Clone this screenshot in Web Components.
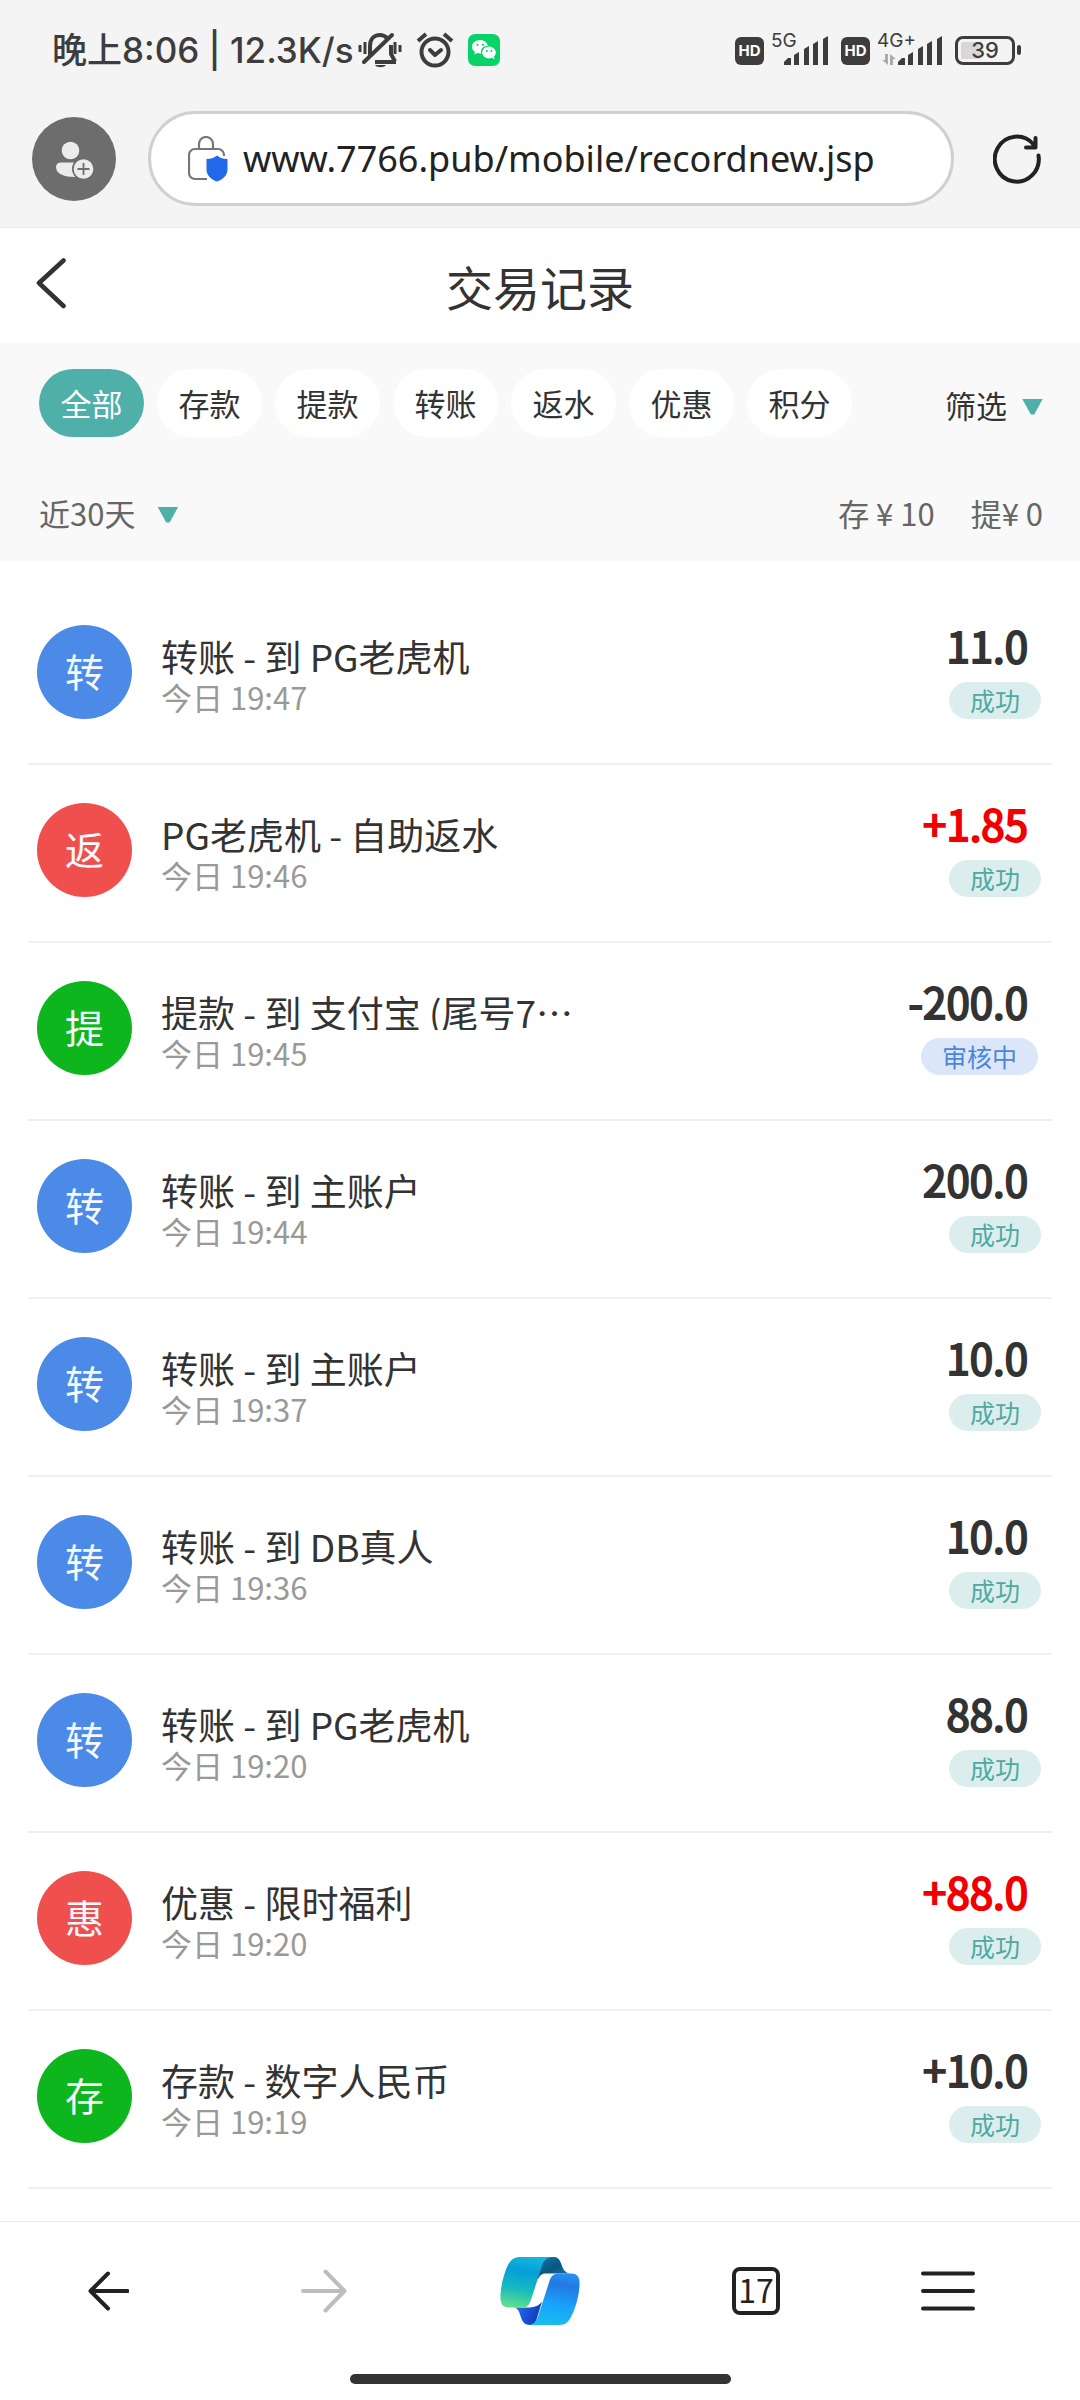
<!DOCTYPE html>
<html lang="zh-CN">
<head>
<meta charset="UTF-8">
<meta name="viewport" content="width=device-width, initial-scale=1">
<title>交易记录</title>
<style>
  body {
    margin: 0;
    background: #fff;
    color: #333;
    font-family: "Noto Sans CJK SC", sans-serif;
  }
</style>
</head>
<body>
<app-screen></app-screen>

<script>
// Iconos en SVG, cada uno con su propio viewBox
const icons = {
  mute: `<svg width="44" height="38" viewBox="0 0 44 38" fill="none" stroke="#3d3d3d" stroke-width="4">
    <path d="M12 24V15C12 8 16 4 22 4c3 0 5 1 7 3M33 14v9l4 7.500M17 31h21"/>
    <path d="M6 31 34 4" stroke-linecap="round"/>
    <path d="M2 14v7M7 11v12M37 11v12M42 14v7" stroke-width="3"/>
    <path d="M17 34h11c-2 3-9 3-11 0z" fill="#3d3d3d" stroke="none"/></svg>`,
  alarm: `<svg width="38" height="36" viewBox="0 0 38 36" fill="none" stroke="#3d3d3d" stroke-width="4">
    <circle cx="19" cy="20" r="13.500"/><path d="m14 18 5 5 6-5" stroke-linejoin="round" stroke-linecap="round"/>
    <path d="m2 9 8-7M36 9l-8-7"/></svg>`,
  wechat: `<svg width="32" height="32" viewBox="0 0 32 32"><rect width="32" height="32" rx="7" fill="#07d466"/>
    <path fill="#fff" d="M12 6C7.500 6 4 9 4 12.700c0 2.100 1.100 3.900 2.900 5.100L6.200 20.500l3-1.500c1.300.4 2.800.5 4 .4-1.200-4.200 2-7.500 6.700-7.600C19.300 8.400 16 6 12 6z"/>
    <ellipse cx="21" cy="18.500" rx="6.800" ry="5.900" fill="#fff"/><path d="m23 23 3.500 2.500-.8-4z" fill="#fff"/>
    <g fill="#07d466"><circle cx="9.500" cy="10.800" r="1.100"/><circle cx="15" cy="10.800" r="1.100"/><circle cx="18.800" cy="17" r="1"/><circle cx="23.300" cy="17" r="1"/></g></svg>`,
  bars: `<svg width="44" height="29" viewBox="0 0 44 29" fill="#3d3d3d">
    <path d="M0 29v-3l4-4h3v7zM10 29V19l5-3v13zM20 29V13l5-3v19zM29 29V8l5-3v24zM39 29V3l5-3v29z"/></svg>`,
  user: `<svg width="84" height="84" viewBox="0 0 84 84"><circle cx="42" cy="42" r="42" fill="#6d6d6d"/>
    <g fill="#ececec"><circle cx="38.500" cy="33.500" r="8.800"/>
    <path d="M29 45.500h18v14.300c-12 1-23-2-23-9.800 0-3 2-4.500 5-4.500z"/></g>
    <circle cx="51.500" cy="52" r="11.500" fill="#6d6d6d"/><circle cx="51.500" cy="52" r="9.800" fill="#ececec"/>
    <path d="M51.500 46v12M45.500 52h12" stroke="#6d6d6d" stroke-width="1.800"/></svg>`,
  lock: `<svg width="40" height="46" viewBox="0 0 40 46" fill="none">
    <path d="M11 12V8a7 7 0 0 1 14 0v4M36 20v-1a6 6 0 0 0-6-6H7a6 6 0 0 0-6 6v18a6 6 0 0 0 6 6h12" stroke="#777" stroke-width="2.200"/>
    <path d="M29 19.500c3 2.500 6 3.500 10.500 3.500v10.500c0 6-5 10-10.500 12-5.500-2-10.500-6-10.500-12V23c4.500 0 7.500-1 10.500-3.500z" fill="#2168ea"/></svg>`,
  reload: `<svg width="48" height="50" viewBox="0 0 48 50" fill="none" stroke="#222" stroke-width="4" stroke-linecap="round" stroke-linejoin="round">
    <path d="M45.500 21.500a22 22.500 0 1 1-5-11M42.500 4v9.500H33"/></svg>`,
  chevron: `<svg width="32" height="52" viewBox="0 0 32 52" fill="none" stroke="#333" stroke-width="4.600" stroke-linecap="round" stroke-linejoin="round">
    <path d="M27.500 3.500 3 26l24.500 23"/></svg>`,
  back: `<svg width="42" height="40" viewBox="0 0 42 40" fill="none" stroke="#222" stroke-width="4" stroke-linecap="round" stroke-linejoin="round">
    <path d="M21 2.500 3.500 20 21 37.500M3.500 20h37"/></svg>`,
  forward: `<svg width="46" height="44" viewBox="0 0 46 44" fill="none" stroke="#bdbdbd" stroke-width="4" stroke-linecap="round" stroke-linejoin="round">
    <path d="m24.500 2.500 19 19.500-19 19.500M43.500 22H2"/></svg>`,
  copilot: `<svg width="80" height="70" viewBox="0 0 80 70">
    <defs>
      <linearGradient id="a" x1="0.600" y1="0" x2="0.400" y2="1"><stop stop-color="#15b7dd"/><stop offset=".3" stop-color="#049fd8"/><stop offset=".65" stop-color="#16b9c0"/><stop offset="1" stop-color="#5ddc8d"/></linearGradient>
      <linearGradient id="b" x1="0.600" y1="0" x2="0.400" y2="1"><stop stop-color="#2690f0"/><stop offset=".2" stop-color="#2278e2"/><stop offset=".6" stop-color="#18a3fb"/><stop offset="1" stop-color="#19bdec"/></linearGradient>
      <linearGradient id="c" x1="0" y1="0" x2="1" y2="1"><stop stop-color="#0a7fb5"/><stop offset=".5" stop-color="#0b5580"/><stop offset="1" stop-color="#1582b8"/></linearGradient>
      <linearGradient id="d" x1="0" y1="0" x2="1" y2=".3"><stop stop-color="#2a78ee"/><stop offset="1" stop-color="#1238c4"/></linearGradient>
    </defs>
    <path fill="url(#c)" d="M42 1h12c4 0 6 3 7.500 7.500C63 13 65 17.500 71 17.500H46c-4 0-6 1.500-7.500 5L34 24z"/>
    <path fill="url(#d)" d="M13 51.500h14c7 0 12-1.500 15-6l-5 16.500c-1.500 5-4 7-7 7-6 0-8-4-9.500-9-1.500-4.500-2.500-8.500-7.500-8.500z"/>
    <path fill="url(#a)" d="M20 1h34c-7 0-10.500 3-12.500 10l-10 31.500c-2 6-4 9-9 9H9c-7 0-9-5-8.500-13C1 28 5 15 8 9c3-6 7-8 12-8z"/>
    <path fill="url(#b)" d="M59 17.500h12c7 0 9 4 8.500 12C79 41 75 53 71.500 60c-3 6-6 9-12 9H29c5-.5 7.500-4 9.500-10L49.500 25c1.500-5 4-7.500 9.500-7.500z"/></svg>`,
  menu: `<svg width="54" height="40" viewBox="0 0 54 40" stroke="#222" stroke-width="4" stroke-linecap="round">
    <path d="M2 2.500h50M2 20h50M2 37.500h50"/></svg>`,
  data: `<svg width="14" height="11" viewBox="0 0 14 11" fill="#aaa"><path d="M3 0h3v11L0 6h3zM8 0l6 5h-3v6H8z"/></svg>`,
};

// Elemento para pintar un icono por su nombre
class AppIcon extends HTMLElement {
  constructor() {
    super();
    this.attachShadow({ mode: 'open' });
  }

  connectedCallback() {
    this.shadowRoot.innerHTML = `
      <style>
        :host { display: block; flex: none; }
        svg { display: block; }
      </style>
      ${icons[this.getAttribute('name')]}
    `;
  }
}
customElements.define('app-icon', AppIcon);

// Indicador de señal con la red encima de las barras
class SignalLevel extends HTMLElement {
  constructor() {
    super();
    this.attachShadow({ mode: 'open' });
  }

  connectedCallback() {
    this.shadowRoot.innerHTML = `
      <style>
        :host { display: flex; align-items: end; position: relative; }
        .hd {
          width: 29px;
          margin-right: 20px;
          border-radius: 6px;
          background: #3d3d3d;
          color: #fff;
          font: 700 15px/28px Inter, sans-serif;
          text-align: center;
        }
        :host([data]) .hd { margin-right: 28px; }
        .net {
          position: absolute;
          left: 36px;
          top: -7px;
          font: 400 19px/24px Inter, sans-serif;
        }
        .data { position: absolute; left: 41px; bottom: 0; }
      </style>
      <span class="hd">HD</span>
      <span class="net">${this.getAttribute('net')}</span>
      ${this.hasAttribute('data') ? '<app-icon class="data" name="data"></app-icon>' : ''}
      <app-icon name="bars"></app-icon>
    `;
  }
}
customElements.define('signal-level', SignalLevel);

// Barra de estado del teléfono
class StatusBar extends HTMLElement {
  constructor() {
    super();
    this.attachShadow({ mode: 'open' });
  }

  connectedCallback() {
    this.shadowRoot.innerHTML = `
      <style>
        :host {
          display: flex;
          align-items: center;
          justify-content: space-between;
          height: 100px;
          padding: 0 59px 0 52px;
          color: #3d3d3d;
        }
        .side { display: flex; align-items: center; }
        .clock { font: 500 35px/40px Inter, "Noto Sans CJK SC", sans-serif; margin-right: 4px; }
        .left app-icon { margin-right: 14px; }
        .right { gap: 13px; }
        .battery { display: flex; align-items: center; gap: 2px; }
        .level {
          box-sizing: border-box;
          width: 60px;
          height: 29px;
          border: 3px solid #3d3d3d;
          border-radius: 8px;
          background: linear-gradient(90deg, #d8d8d8 40%, transparent 40%) content-box;
          padding: 3px;
          font: 500 22px/17px Inter, sans-serif;
          text-align: center;
        }
        .nub { width: 4px; height: 10px; border-radius: 2px; background: #3d3d3d; }
      </style>
      <div class="side left">
        <span class="clock">晚上8:06 | 12.3K/s</span>
        <app-icon name="mute"></app-icon>
        <app-icon name="alarm"></app-icon>
        <app-icon name="wechat"></app-icon>
      </div>
      <div class="side right">
        <signal-level net="5G"></signal-level>
        <signal-level net="4G+" data></signal-level>
        <div class="battery"><div class="level">39</div><div class="nub"></div></div>
      </div>
    `;
  }
}
customElements.define('status-bar', StatusBar);

// Barra de direcciones del navegador
class AddressBar extends HTMLElement {
  constructor() {
    super();
    this.attachShadow({ mode: 'open' });
  }

  connectedCallback() {
    this.shadowRoot.innerHTML = `
      <style>
        :host {
          display: flex;
          align-items: center;
          gap: 32px;
          padding: 11px 39px 21px 32px;
          border-bottom: 1px solid #ececec;
        }
        button { padding: 0; border: 0; background: none; }
        .field {
          box-sizing: border-box;
          flex: 1;
          display: flex;
          align-items: center;
          gap: 15px;
          height: 95px;
          padding: 0 37px;
          border: 3px solid #d0d0d0;
          border-radius: 48px;
          background: #fff;
        }
        input {
          flex: 1;
          min-width: 0;
          padding: 0;
          border: 0;
          outline: 0;
          background: none;
          color: #222;
          font: 36px/48px "Noto Sans", sans-serif;
        }
        .reload { margin-left: 7px; }
      </style>
      <button aria-label="账户"><app-icon name="user"></app-icon></button>
      <label class="field">
        <app-icon name="lock"></app-icon>
        <input type="text" aria-label="网址" value="${this.getAttribute('url')}">
      </label>
      <button class="reload" aria-label="刷新"><app-icon name="reload"></app-icon></button>
    `;
  }
}
customElements.define('address-bar', AddressBar);

// Cabecera de la página con el botón de volver
class PageHeader extends HTMLElement {
  constructor() {
    super();
    this.attachShadow({ mode: 'open' });
    this.shadowRoot.innerHTML = `
      <style>
        :host {
          display: grid;
          grid-template-columns: 1fr auto 1fr;
          align-items: center;
          height: 115px;
          padding: 0 36px;
        }
        button { justify-self: start; padding: 0 0 6px; border: 0; background: none; }
        h1 { margin: 0; font-size: 47px; line-height: 64px; font-weight: 400; }
      </style>
      <button aria-label="返回"><app-icon name="chevron"></app-icon></button>
      <h1><slot></slot></h1>
    `;
  }
}
customElements.define('page-header', PageHeader);

// Filtros por tipo, periodo y totales
class RecordFilters extends HTMLElement {
  constructor() {
    super();
    this.attachShadow({ mode: 'open' });
    this.types = ['全部', '存款', '提款', '转账', '返水', '优惠', '积分'];
  }

  connectedCallback() {
    this.render();
    this.addClickListeners();
  }

  addClickListeners = () => {
    const tabs = this.shadowRoot.querySelectorAll('.tab');
    tabs.forEach(tab => {
      tab.addEventListener('click', () => {
        tabs.forEach(t => t.classList.toggle('active', t === tab));
      });
    });
  }

  render = () => {
    this.shadowRoot.innerHTML = `
      <style>
        :host {
          display: block;
          padding: 26px 37px 25px 39px;
          background: #f9f9f9;
          font-size: 31px;
          line-height: 46px;
        }
        .row { display: flex; align-items: center; justify-content: space-between; }
        .tabs { display: flex; gap: 13px; }
        button { padding: 0; border: 0; background: none; color: inherit; font: inherit; }
        .tab { width: 105px; height: 68px; border-radius: 34px; background: #fff; }
        .tab.active { background: #4fafa9; color: #fff; }
        .drop { display: flex; align-items: center; gap: 15px; padding-top: 4px; }
        .drop::after {
          content: "";
          width: 21px;
          height: 17px;
          margin-top: 4px;
          background: #4fafa9;
          clip-path: polygon(0 0, 100% 0, 58% 94%, 42% 94%);
        }
        .summary { margin-top: 53px; color: #666; }
        .summary .drop { gap: 22px; padding-top: 0; }
        .totals { display: flex; gap: 36px; }
      </style>
      <div class="row">
        <div class="tabs">
          ${this.types.map((type, i) => `<button class="tab${i === 0 ? ' active' : ''}">${type}</button>`).join('')}
        </div>
        <button class="drop">筛选</button>
      </div>
      <div class="row summary">
        <button class="drop">近30天</button>
        <div class="totals"><span>存 ¥ 10</span><span>提¥ 0</span></div>
      </div>
    `;
  }
}
customElements.define('record-filters', RecordFilters);

// Una fila del historial
class RecordItem extends HTMLElement {
  constructor() {
    super();
    this.attachShadow({ mode: 'open' });
  }

  connectedCallback() {
    this.shadowRoot.innerHTML = `
      <style>
        :host {
          display: flex;
          align-items: end;
          gap: 29px;
          padding: 33px 11px 44px 9px;
          border-bottom: 2px solid #f0f0f0;
        }
        .avatar {
          flex: none;
          box-sizing: border-box;
          width: 95px;
          height: 94px;
          border-radius: 50%;
          background: #4b8ae6;
          color: #f5f8fc;
          font-size: 39px;
          line-height: 90px;
          text-align: center;
        }
        :host([kind="red"]) .avatar { background: #ef504d; }
        :host([kind="green"]) .avatar { background: #0cb61c; }
        .text { flex: 1; min-width: 0; }
        .name { font-size: 37px; line-height: 36px; white-space: nowrap; }
        :host([clip]) .name { overflow: hidden; }
        .time { color: #999; font-size: 31px; line-height: 45px; }
        .side { display: flex; flex-direction: column; align-items: end; gap: 12px; }
        .amount {
          padding-right: 13px;
          font-size: 42px;
          line-height: 50px;
          -webkit-text-stroke: 2px currentColor;
        }
        :host([bonus]) .amount { color: #f00000; }
        .state {
          padding: 0 21px;
          border-radius: 19px;
          background: #dbeeed;
          color: #4fa9a2;
          font-size: 25px;
          line-height: 37px;
        }
        :host([pending]) .state { margin-right: 3px; background: #dbe7f9; color: #4b86dc; }
      </style>
      <div class="avatar">${this.getAttribute('mark')}</div>
      <div class="text">
        <div class="name"><slot></slot></div>
        <div class="time">今日 ${this.getAttribute('time')}</div>
      </div>
      <div class="side">
        <div class="amount">${this.getAttribute('amount')}</div>
        <div class="state">${this.hasAttribute('pending') ? '审核中' : '成功'}</div>
      </div>
    `;
  }
}
customElements.define('record-item', RecordItem);

// Barra inferior de navegación
class BottomBar extends HTMLElement {
  constructor() {
    super();
    this.attachShadow({ mode: 'open' });
    this.shadowRoot.innerHTML = `
      <style>
        :host { display: block; border-top: 1px solid #ebebeb; background: #fff; }
        nav { display: grid; grid-template-columns: repeat(5, 1fr); height: 138px; }
        button { display: grid; place-items: center; padding: 0; border: 0; background: none; }
        button:last-child { padding-right: 48px; }
        .count {
          box-sizing: border-box;
          width: 48px;
          height: 48px;
          border: 4px solid #222;
          border-radius: 8px;
          color: #222;
          font: 32px/36px "Noto Sans CJK SC", sans-serif;
          text-align: center;
        }
        .home { width: 381px; height: 10px; margin: 14px auto 16px; border-radius: 5px; background: #333; }
      </style>
      <nav>
        <button aria-label="后退"><app-icon name="back"></app-icon></button>
        <button aria-label="前进"><app-icon name="forward"></app-icon></button>
        <button aria-label="Copilot"><app-icon name="copilot"></app-icon></button>
        <button aria-label="标签页"><span class="count">17</span></button>
        <button aria-label="菜单"><app-icon name="menu"></app-icon></button>
      </nav>
      <div class="home"></div>
    `;
  }
}
customElements.define('bottom-bar', BottomBar);

// Pantalla completa
class AppScreen extends HTMLElement {
  constructor() {
    super();
    this.attachShadow({ mode: 'open' });
    this.records = [
      { mark: '转', kind: 'blue', name: '转账 - 到 PG老虎机', time: '19:47', amount: '11.0' },
      { mark: '返', kind: 'red', name: 'PG老虎机 - 自助返水', time: '19:46', amount: '+1.85', flags: 'bonus' },
      { mark: '提', kind: 'green', name: '提款 - 到 支付宝 (尾号7…', time: '19:45', amount: '-200.0', flags: 'pending clip' },
      { mark: '转', kind: 'blue', name: '转账 - 到 主账户', time: '19:44', amount: '200.0' },
      { mark: '转', kind: 'blue', name: '转账 - 到 主账户', time: '19:37', amount: '10.0' },
      { mark: '转', kind: 'blue', name: '转账 - 到 DB真人', time: '19:36', amount: '10.0' },
      { mark: '转', kind: 'blue', name: '转账 - 到 PG老虎机', time: '19:20', amount: '88.0' },
      { mark: '惠', kind: 'red', name: '优惠 - 限时福利', time: '19:20', amount: '+88.0', flags: 'bonus' },
      { mark: '存', kind: 'green', name: '存款 - 数字人民币', time: '19:19', amount: '+10.0' },
    ];
  }

  connectedCallback() {
    this.shadowRoot.innerHTML = `
      <style>
        :host { display: flex; flex-direction: column; min-height: 100vh; }
        .browser { background: #f4f4f4; }
        main { flex: 1; }
        .list { padding: 26px 28px 0; }
      </style>
      <div class="browser">
        <status-bar></status-bar>
        <address-bar url="www.7766.pub/mobile/recordnew.jsp"></address-bar>
      </div>
      <main>
        <page-header>交易记录</page-header>
        <record-filters></record-filters>
        <div class="list">
          ${this.records.map(r => `<record-item mark="${r.mark}" kind="${r.kind}" time="${r.time}" amount="${r.amount}" ${r.flags || ''}>${r.name}</record-item>`).join('')}
        </div>
      </main>
      <bottom-bar></bottom-bar>
    `;
  }
}
customElements.define('app-screen', AppScreen);
</script>
</body>
</html>
